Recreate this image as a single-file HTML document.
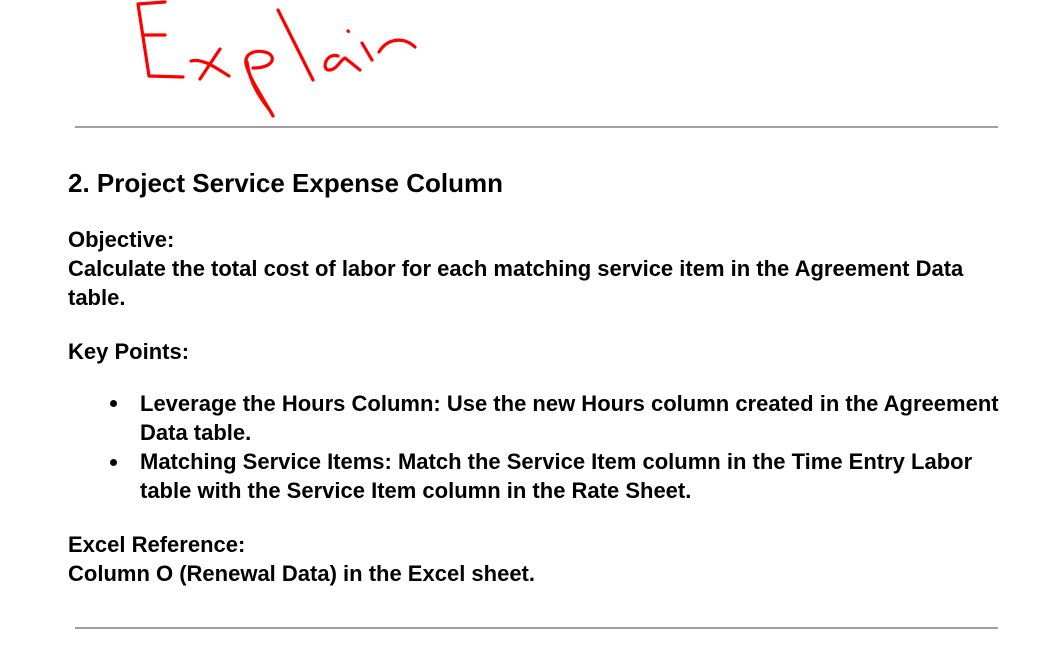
<!DOCTYPE html>
<html><head><style>
body{margin:0;width:1050px;height:666px;background:#fff;position:relative;overflow:hidden;font-family:"Liberation Sans",Arial,sans-serif;color:#000}
.t{position:absolute;white-space:nowrap;font-weight:bold;font-size:22px;line-height:24px}
.hr{position:absolute;left:75px;width:923px;height:2px;background:#a0a0a0}
.b{position:absolute;width:7px;height:7px;border-radius:50%;background:#000;left:110px}
</style></head><body>
<svg width="1050" height="130" style="position:absolute;left:0;top:0" fill="none" stroke="#f00" stroke-width="3.2" stroke-linecap="round" stroke-linejoin="round">
<path d="M165,2 L138,4 L149,76 L183,77 M143,35 L165,35"/>
<path d="M191,61 C203,58 216,68 229,76 M220,49 L200,79"/>
<path d="M273,116 C262,96 250,80 246,64 C244,52 258,49 268,53 C277,58 272,68 253,68 M247,62 C250,85 262,100 271,112"/>
<path d="M278,10 L313,80"/>
<path d="M338,56 C326,52 321,70 329,70 C337,70 340,60 345,58 L360,70"/>
<path d="M348,31 L348.5,31.5 M362,43 L372,60"/>
<path d="M379,52 C386,40 402,35 415,47"/>
</svg>
<div class="hr" style="top:126px"></div>
<div class="t" style="left:68px;top:169px;font-size:26px;line-height:28px">2. Project Service Expense Column</div>
<div class="t" style="left:68px;top:228px">Objective:</div>
<div class="t" style="left:68px;top:257px">Calculate the total cost of labor for each matching service item in the Agreement Data</div>
<div class="t" style="left:68px;top:286px">table.</div>
<div class="t" style="left:68px;top:340px">Key Points:</div>
<div class="b" style="top:400px"></div>
<div class="t" style="left:140px;top:392px">Leverage the Hours Column: Use the new Hours column created in the Agreement</div>
<div class="t" style="left:140px;top:421px">Data table.</div>
<div class="b" style="top:459px"></div>
<div class="t" style="left:140px;top:450px">Matching Service Items: Match the Service Item column in the Time Entry Labor</div>
<div class="t" style="left:140px;top:479px">table with the Service Item column in the Rate Sheet.</div>
<div class="t" style="left:68px;top:533px">Excel Reference:</div>
<div class="t" style="left:68px;top:562px">Column O (Renewal Data) in the Excel sheet.</div>
<div class="hr" style="top:627px"></div>
</body></html>
